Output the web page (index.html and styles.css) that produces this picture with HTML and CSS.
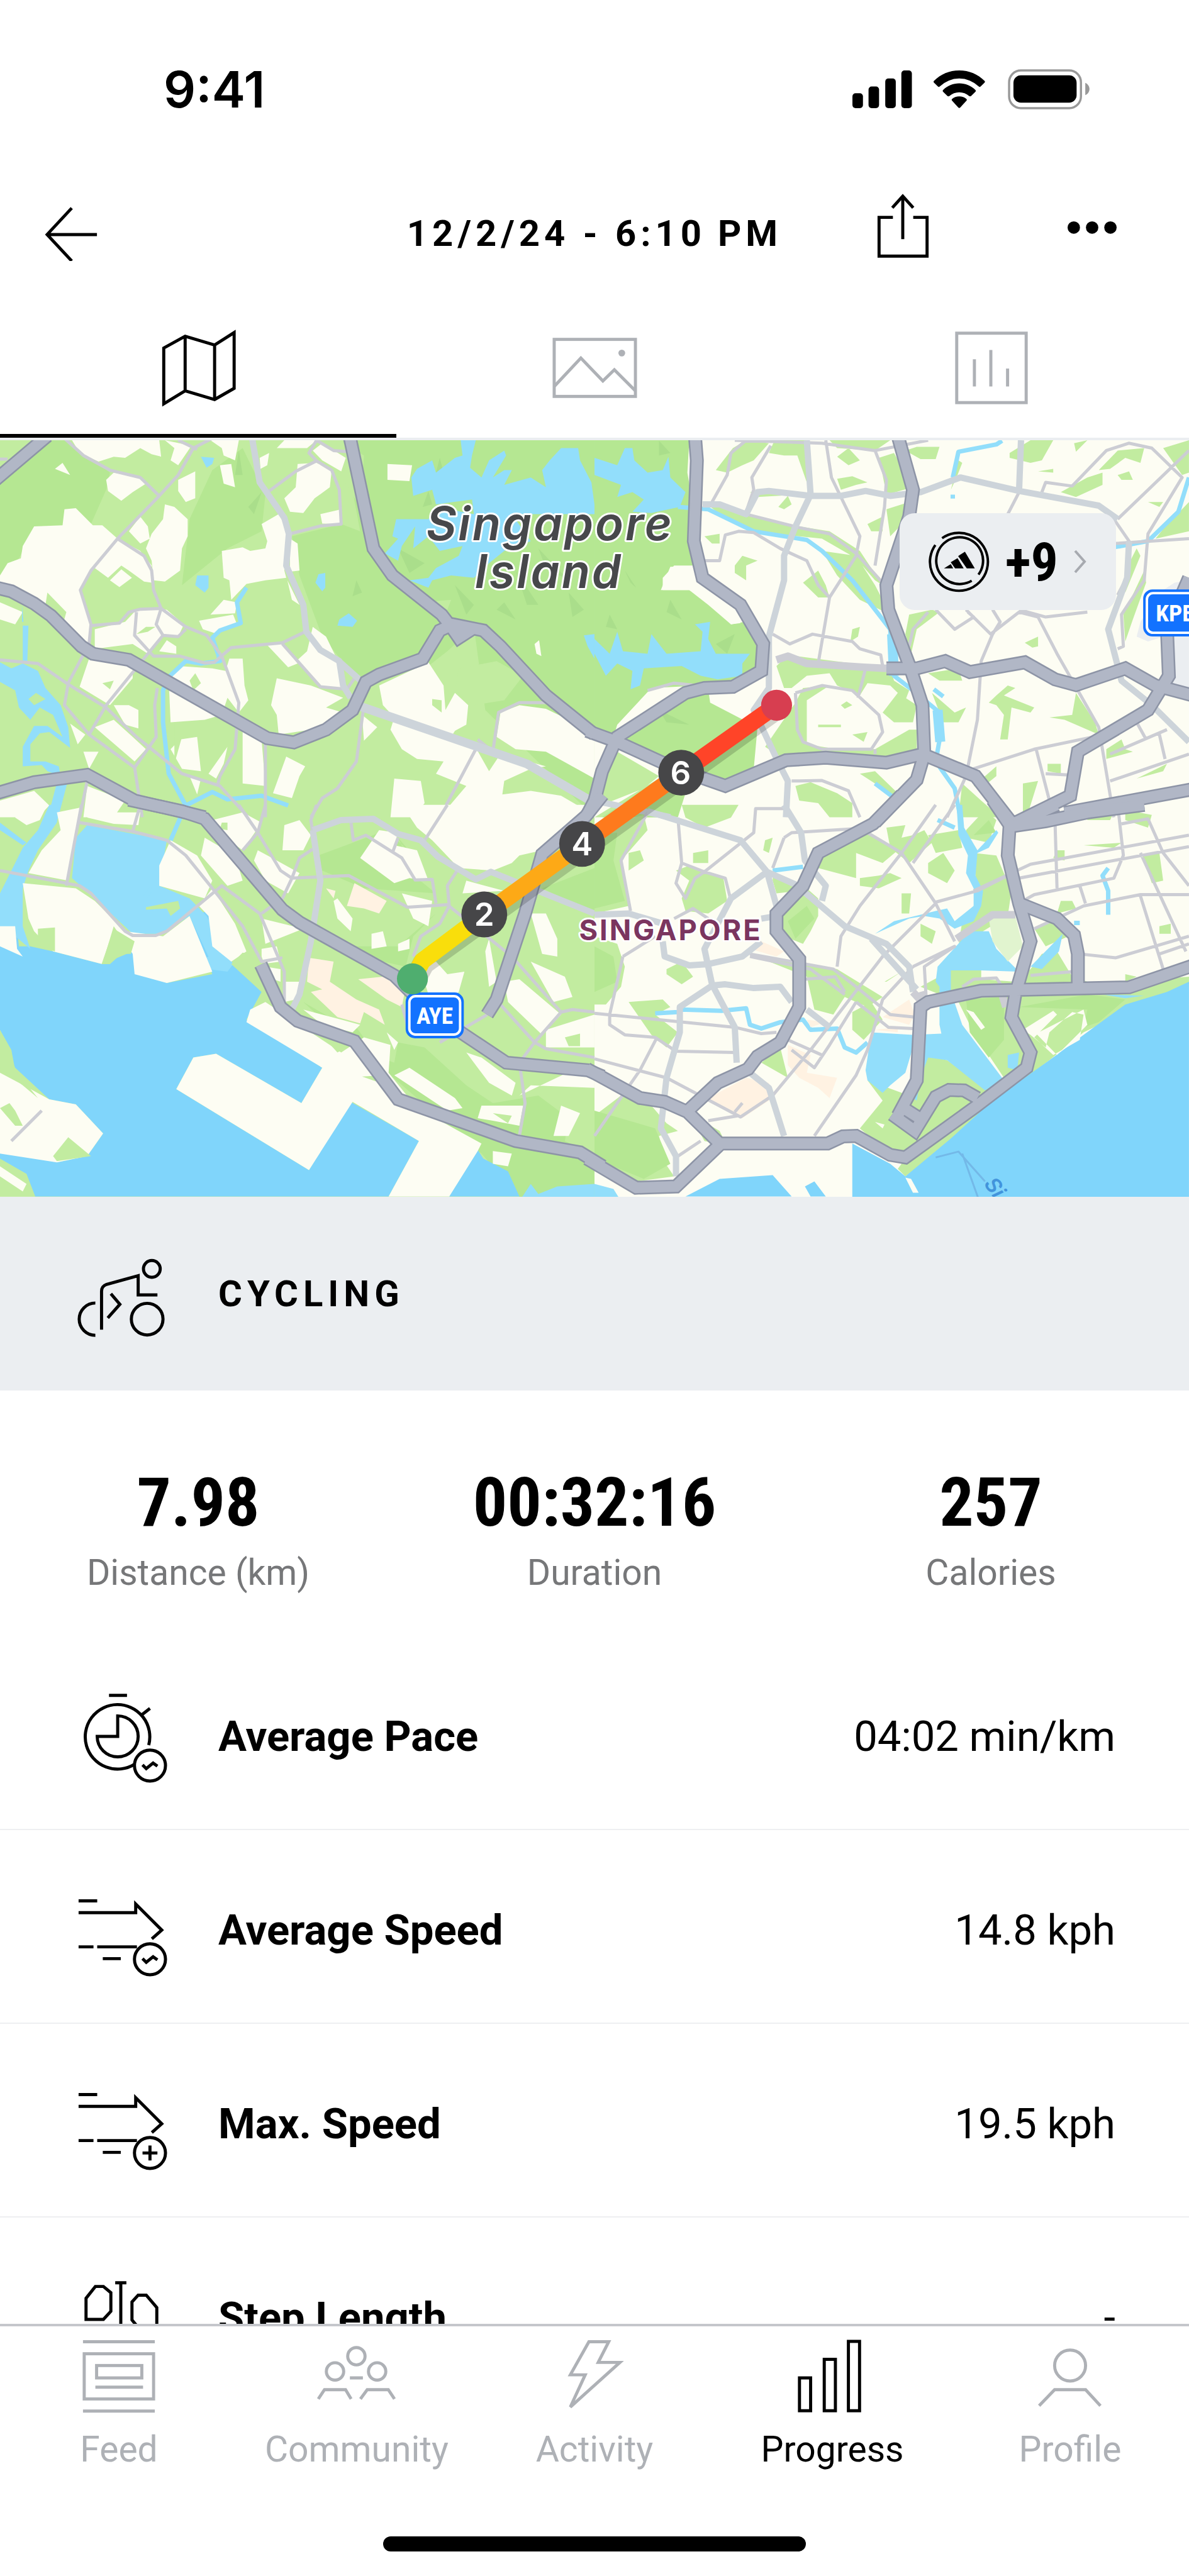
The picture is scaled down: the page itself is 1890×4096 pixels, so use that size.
FILE: index.html
```html
<!DOCTYPE html>
<html lang="en">
<head>
    <meta charset="UTF-8">
    <meta name="viewport" content="width=device-width, initial-scale=1">
    <title>Cycling - 12/2/24</title>
    <link rel="stylesheet" href="styles.css">
</head>
<body>
    <div class="statusBar">
        <span class="time">9:41</span>
        <svg class="statusIcons" viewBox="1377 108 384 68">
            <rect x="1377" y="149" width="17" height="24" rx="5"/>
            <rect x="1403" y="138" width="17" height="35" rx="5"/>
            <rect x="1430" y="125" width="17" height="48" rx="5"/>
            <rect x="1456" y="112" width="17" height="61" rx="5"/>
            <path d="M1549.500 112c16 0 30 6 41 17q1 1 0 2.500l-6.500 6.500q-1.500 1.500-3 0a45 45 0 0 0-63 0q-1.500 1.500-3 0l-6.500-6.500q-1-1.500 0-2.500c11-11 25-17 41-17z"/>
            <path d="M1549.500 133c10 0 19 4 26 10.500q1.500 1.500 0 3l-7 7q-1.500 1-3 0a24 24 0 0 0-32 0q-1.500 1-3 0l-7-7q-1.500-1.500 0-3c7-6.500 16-10.500 26-10.500z"/>
            <path d="M1549.500 154c4.500 0 8.500 1.500 11.500 4q1.500 1.500 0 3l-10 11q-1.500 1.500-3 0l-10-11q-1.500-1.500 0-3c3-2.500 7-4 11.500-4z"/>
            <rect x="1630" y="112" width="116" height="61" rx="19" fill="none" stroke="#999" stroke-width="3.500"/>
            <rect x="1637" y="120" width="102" height="44" rx="12"/>
            <path d="M1753 132c9 4 9 16 0 20z" fill="#999"/>
        </svg>
    </div>

    <header class="header">
        <a class="back" href="#" aria-label="Back">
            <svg viewBox="72 332 90 90"><path d="M116 336L76 379l40 43M76 379h81"/></svg>
        </a>
        <h1 class="title">12/2/24 - 6:10&#8201;PM</h1>
        <div class="actions">
            <button class="iconBtn" aria-label="Share">
                <svg class="share" viewBox="1412 312 92 130"><path d="M1442 351.500h-22.500v63h78v-63H1475M1458 317v70M1441 336l17-19 17 19"/></svg>
            </button>
            <button class="iconBtn" aria-label="More">
                <svg class="more" viewBox="1722 354 82 46"><circle cx="1734" cy="368" r="10"/><circle cx="1763.500" cy="368" r="10"/><circle cx="1793" cy="368" r="10"/></svg>
            </button>
        </div>
    </header>

    <div class="tabs">
        <button class="tab active" aria-label="Map">
            <svg viewBox="250 523 140 140"><path d="M264.500 652v-90L299 543l47.500 14L378 537v90l-31.500 18L299 631zM299 543v88M346.500 557v88"/></svg>
        </button>
        <button class="tab" aria-label="Photos">
            <svg viewBox="890 523 140 140"><rect x="895" y="548" width="131" height="92"/><path d="M895 624l43-46 35.500 37 18.500-18 34 34"/><circle cx="1004" cy="570" r="3" class="solid"/></svg>
        </button>
        <button class="tab" aria-label="Charts">
            <svg viewBox="1530 523 140 140"><rect x="1545" y="538" width="112" height="112"/><path d="M1573.500 580v44M1600 565v59M1627 595v29"/></svg>
        </button>
    </div>

    <main class="content">
        <section class="mapBox">
            <svg class="map" viewBox="0 711 1920 1222">
                <defs>
                    <!-- expressways, drawn twice: wide casing, then fill -->
                    <g id="motorways">
                        <path transform="translate(0 700) scale(.6122 .3954)" d="M-20 200L125 10M-10 630L30 645 90 695 135 745 215 870 245 900 340 925 705 1245 775 1262 860 1210 930 1130 965 1015 1000 985 1115 920 1160 805 1195 780 1275 805 1320 870 1440 1070 1568 1230M922 10L985 470 1035 580 1165 740 1190 790 1210 835 1245 800M-20 1475L90 1425 230 1395 355 1500 480 1545 540 1568"/>
                        <path transform="translate(960 700) scale(.6122 .3954)" d="M265 10L270 110 262 440 285 590 385 700 445 860 440 970 365 1035 290 1040 240 1060 60 1240 20 1380 0 1500-20 1560M-20 1215L60 1260 215 1370 345 1440 505 1335 610 1325 770 1345 865 1310 1005 1400 1100 1590M800 10L840 230 830 340 770 620 775 720 830 945 865 1110 870 1310 850 1415 740 1590M770 960L850 960 925 930 990 975 1135 935 1215 1005 1270 1028 1400 960 1480 1030 1590 1075M1568 590L1510 800 1515 990 1460 1130 1275 1300 1255 1480 1110 1590M1240 1550L1590 1450"/>
                        <path transform="translate(0 1300) scale(.6122 .4082)" d="M340-20L480 25 540 55 745 415 790 465 1040 675 1090 750M1190 875L1335 1020 1550 1050 1590 1075M688 632L740 800 785 855 935 935 1050 1165 1360 1330 1530 1375 1590 1430M1590-40L1545 45 1430 195 1385 430 1310 770 1285 830"/>
                        <path transform="translate(960 1300) scale(.6122 .4082)" d="M-20 1045L120 1160 185 1175 245 1215 330 1340 615 1340 655 1312 690 1310 780 1385 820 1395 1005 1195 1140 1040 1150 980 1100 840 1110 750 1150 540 1120 390 1090 200 1095 80 1050-20M250 1205L325 1100 405 1045 430 995 490 940 540 800 540 610 480 500 480 430 550 320 590 190 735 75 810-40M330 1345L215 1510 110 1515-20 1400M1100 85L1190 65 1300 30 1450 0M1115 70L1220 0M1120 390L1220 450 1265 515 1275 590 1275 725M800 1230L850 1090 860 800 880 780 1020 735 1410 722 1590 630M785 1225L845 1290 900 1155 935 1128 975 1130 1010 1160M805 1190L868 1250"/>
                    </g>
                </defs>

                <rect class="grass" x="0" y="711" width="980" height="1222"/>
                <rect class="land" x="960" y="711" width="960" height="1222"/>

                <!-- north west -->
                <g transform="translate(0 700) scale(.6122 .3954)">
                    <path class="wood" d="M0 200L130 28 180 28 290 160 280 230 240 370 160 380 90 380 50 510 0 580zM560 150L640 60 700 250 690 400 600 470 480 620 500 350zM905 28H1568V1568L1280 1130 1250 790 1180 890 1130 950 1000 1000 940 1000 850 830 790 580 770 420 900 370 950 400z"/>
                    <path class="grass" d="M1210 960L1310 930 1380 990 1330 1090 1250 1110 1200 1050zM1110 690L1190 680 1170 760zM905 40L960 90 950 300 910 200z"/>
                    <path class="shade" d="M1050 470L1120 530 1080 570zM940 600L955 650 930 665zM1060 600L1140 720 1080 660zM630 70L640 170 620 170zM690 240L670 330 655 300zM1130 235L1140 290 1115 300zM1200 620L1250 700 1230 740zM1330 690L1360 760 1310 720zM1360 560L1420 700 1390 700zM1420 470L1500 600 1440 550zM1500 650L1540 720 1510 750zM1160 100L1170 160 1150 160z"/>
                    <path class="land" d="M190 28H420L425 95 400 85 370 60 330 100 300 95 260 115 210 80zM435 28L505 50 470 130 450 110 460 60zM555 28H630L620 110 590 90 585 60zM145 145L165 120 185 170zM280 190L300 160 370 180 385 205 350 240 320 275 285 235zM470 190L515 155V265L490 280 470 235zM580 130L610 125 620 220 590 205zM685 100L710 80 705 130 687 145zM730 60L750 28H835L810 60zM825 70L850 40 912 100 900 155 850 110zM785 125L835 120 875 150 870 220 830 265 800 325 765 320 750 265 780 220zM845 330L895 312 900 370 850 368zM1022 125L1087 130 1080 195 1022 190zM170 310L200 305 245 375 270 375 310 430 240 555 215 640 240 780 235 870 215 870 165 785 175 730 125 650 120 700 50 650 0 620V580L20 530 55 510 60 460 90 380 165 375zM340 400L370 340 390 380 395 430 370 450zM435 290L460 300 495 350V420L480 470 475 560 435 605 405 600 400 520 385 470 400 410 430 350zM250 550L310 430 370 480 400 540V610L380 605 340 560 320 540 285 590zM290 600L320 555 348 590 315 628zM585 480L640 465 660 480 700 470 705 440 690 370 735 330 760 400 750 560 755 590 700 600 650 615 610 680 605 600 590 590zM765 430L785 450 790 560 765 565zM758 600L790 700 770 680zM250 800L330 770 360 720 440 720 485 780 470 830 430 825 390 900 350 860 250 880zM525 765L615 740 625 780 565 815 535 800zM555 740L590 680 625 690 620 735zM420 890L440 845 465 870V900zM705 865L745 860 785 940 760 955zM785 925L810 890 825 790 860 830 885 910 905 1000 900 1040 850 1035zM235 920L330 930 350 960V1000L290 1110 210 1035zM300 1110L340 1110 365 1130V1205L330 1190zM470 950L560 960 595 970 605 920 640 920 645 1030 655 1090 630 1140 600 1080 585 1150 540 1170 450 1180 445 1010zM730 1000L820 1030 905 1080 860 1120 905 1140 860 1190 820 1210 735 1230 730 1150 715 1110zM1000 1030L1130 935 1170 1030 1175 1130 1200 1060 1235 1110 1230 1190 1200 1215 1190 1240 1250 1270 1290 1380 1320 1310 1440 1360 1400 1370 1330 1420 1325 1475 1400 1460 1480 1480 1568 1560V1568H1160L1230 1440 1150 1390 1170 1340 1100 1330 1060 1290 1030 1210 1040 1160 1010 1110zM1310 1240L1320 1140 1370 1110 1440 1125 1500 1170 1568 1240V1410L1440 1300 1360 1290zM1410 860L1422 845 1428 910 1415 900zM250 1200L300 1170 350 1240 385 1290 355 1340zM475 1250L520 1240 530 1380 480 1370 450 1290zM640 1200L690 1250 700 1440 640 1430zM755 1320L805 1360 790 1400 770 1490 720 1470zM955 1150L995 1200 960 1255zM1040 1410L1110 1420 1120 1510 1090 1568H1030zM220 1300L260 1300 235 1370zM500 1400L530 1410 520 1475zM0 1500L90 1460 130 1520 100 1568H0zM0 690L60 730 40 780 0 760zM185 1185L225 1230 205 1270zM550 1390L600 1280 590 1350 570 1410zM230 1440L330 1500 300 1568H220z"/>
                    <path class="grass" d="M360 820L385 790 410 790 390 810zM500 1010L515 980 530 1020 510 1050zM270 1020L300 1010 290 1045zM1140 1085L1165 1090V1140L1140 1110zM460 1180L540 1175 540 1230 480 1240 460 1350z"/>
                    <path class="lake" d="M1215 28H1255L1245 90 1240 140 1270 180 1290 110 1330 70 1335 90 1300 180 1330 150 1350 150 1330 210 1400 180 1440 220 1430 150 1450 110 1480 60H1525L1530 110 1560 200 1568 290V330H1350L1400 440 1330 480 1290 530 1250 590 1190 580 1140 600 1130 630 1080 600 1130 590 1150 550 1210 500 1220 460 1160 480 1130 420 1090 470 1095 380 1060 460 1050 520 1015 490 1050 430 1035 420 1045 350 1130 350 1150 300 1250 330 1245 270 1150 290 1140 230 1090 255 1085 180 1100 145 1140 110 1150 160 1200 100 1220 90zM530 95L565 100 560 125 545 140zM520 580L550 580 550 630 540 650 515 620zM840 575L858 570V630L850 645 832 610zM895 760L920 735 942 765 930 790 890 785zM0 935L30 960 60 940 100 970 120 1040 160 1110 180 1200 185 1285 130 1220 105 1225 80 1270 80 1340 120 1340 155 1360 160 1400 125 1380 110 1355 60 1360 60 1280 90 1195 125 1195 165 1240 140 1150 105 1120 80 1170 50 1120 40 1050 0 1015zM75 1085L90 1110 120 1085 95 1060zM58 700L62 770 58 770zM60 785L75 785 72 940 60 940zM1540 825L1568 820V920L1550 870z"/>
                    <path class="river" d="M650 630L625 690 635 775 580 805 560 835 575 900 580 930 530 940 490 930 445 995 430 1050 430 1180 445 1390 490 1520 560 1465 600 1495 690 1480 760 1520"/>
                    <path class="river wide" d="M165 1420L140 1568"/>
                    <path class="minor" d="M170 20L220 90 290 150 370 180 420 255M560 20L510 60 470 170 420 255 310 430 240 560 212 640 240 780 235 860 180 1020 170 1110 235 1230 355 1365 375 1568M470 28L520 65M310 430L380 500 400 560 405 640 425 715 412 780 430 825 390 900 280 1110 235 1230M240 785L315 775 340 730 370 718 425 715 490 790 545 825 585 910 630 1100 620 1290 580 1400 575 1430M360 730L355 825 405 910 475 910 540 938 565 935 610 875 745 855 805 810M430 825L470 830 490 800M0 925L100 940 180 1025 280 1120 360 1240 480 1390 580 1440 655 1568M745 860L845 1035 915 1045 935 1000M415 1040L408 1110 412 1240 355 1365M700 1260V1568M960 1110L940 1340 890 1450 850 1490 820 1568M835 28L815 80 835 112 875 150 895 230 900 370 845 378 765 410M835 112L780 155 710 235M835 28L880 70 920 75M1440 1100H1370L1315 1140 1300 1300 1260 1250M1255 1290L1160 1568M230 1420L210 1568M0 105H20"/>
                    <path class="medium" d="M665 20L685 200 750 345 762 410 755 540 800 700 808 810 845 885 895 930 905 1030 925 1080M890 925L955 1015"/>
                    <path class="medium big" d="M950 1115L1390 1350 1568 1510"/>
                </g>

                <!-- north east -->
                <g transform="translate(960 700) scale(.6122 .3954)">
                    <path class="wood" d="M0 28H250L245 160 260 300 250 450 280 540 200 545 175 640 250 640 300 700 360 780 395 770 430 870 430 970 350 1030 280 1030 150 1040 60 1190 50 1240 0 1200z"/>
                    <path class="land" d="M290 1040L370 1060 420 1060 425 1110 380 1160 330 1150 305 1090zM270 540H210L180 590V640L250 640 320 690 360 780 385 775 370 700z"/>
                    <path class="wood" d="M60 1260L230 1060 300 1045 305 1100 380 1160 430 1200 420 1370 340 1440 200 1360z"/>
                    <path class="shade" d="M170 30L200 80 170 90zM80 560L110 630 95 610zM40 740L60 800 30 790zM200 680L230 760 190 730zM320 860L370 820 350 900zM170 1130L250 1190 190 1180z"/>
                    <path class="lake" d="M80 60L100 60 105 110 140 160 180 150 195 95 200 180 240 240 225 300 150 325 100 320 130 270 100 240 60 260 70 210 0 170V100L60 130zM0 840L40 900 60 810 75 890 140 900 150 820 190 900 280 890 285 810 265 780 305 770 300 840 320 900 410 900 390 940 390 990 325 1005 280 990 230 950 130 960 120 1030 95 1045 100 970 60 940 30 990 0 900z"/>
                    <path class="grass" d="M365 60L400 28 460 40 420 110 390 130 350 160 320 150zM475 28H560L560 200 535 90 500 90 460 80zM620 28H780L740 70 640 60zM640 95L670 60 700 110 670 130zM640 185L680 175 720 200 690 210 650 230zM750 100L790 80 840 220 770 250 760 170zM820 70L850 55H910L900 105H860zM290 420L330 410V450L310 450zM370 540L390 500 430 520 400 540 400 600 370 570zM290 280L400 330 540 380 620 400 700 480 760 620 740 600 690 510 600 430 540 420 420 400 330 330zM410 240L550 240 540 250 430 260zM485 300L510 255 520 290 500 310zM720 370L760 340 760 400 730 400zM770 310L830 280V340L780 420zM550 610L590 560 610 620 620 670 590 670zM600 480L690 500 740 620 780 740 700 680 640 580zM680 800L700 790 695 830 675 850zM830 740L890 720 910 730 850 800 835 900 820 820zM940 230L960 110 970 120 955 180zM1095 80L1150 28H1210L1180 110 1150 120 1095 100zM1265 40L1300 28 1270 75zM1330 150L1380 70 1450 60 1440 120 1400 100 1360 145zM1380 170L1410 155 1420 190 1390 190zM1230 240L1300 180 1340 160 1340 210 1270 260zM1170 155L1210 145 1210 160zM1500 60L1568 28V160L1550 170zM1500 390L1568 280V400L1480 430zM1460 280L1500 280 1490 300zM1400 850L1395 740 1450 560 1455 610 1420 760zM1400 560L1430 470 1440 500 1400 650zM1135 855L1170 830 1170 870 1155 875zM480 950L510 905 780 960 790 1010 830 1050 820 1090 780 1030 720 1020 700 1070 640 1030 620 980 560 990 520 1040 500 1040zM450 1280L530 1100 550 1040 620 1030 560 1090 560 1270 640 1290 740 1290 830 1210 850 1210 850 1330 780 1340 500 1330zM650 1110L665 1095 680 1110 660 1125zM590 1190H650V1200H590zM800 1060L850 1110 840 1180 790 1180 760 1140zM880 980L960 960 970 1010 910 1010zM1090 1030L1110 1040 1080 1070 1160 1120 1150 1140 1100 1120 1090 1250 1070 1250 1080 1150 1060 1110 1040 1100 1060 1070zM1270 1060L1320 1180 1330 1230 1240 1170 1200 1160 1260 1150zM890 1060L950 1140 980 1120 960 1180 920 1180zM680 1230L720 1220 710 1260zM530 1440L570 1425 640 1470 680 1510 680 1568 620 1568 590 1510 540 1500zM700 1390L740 1380 800 1470 780 1480 750 1440zM1000 1440L1060 1360 1060 1400 1020 1450zM970 1430L1020 1500 1070 1568H960zM1130 1430L1170 1420 1140 1568H1130zM1195 1350L1230 1350 1230 1390 1195 1380zM1350 1330L1420 1300 1400 1290 1390 1250 1350 1290zM1430 1410L1510 1350 1500 1380zM0 1568L180 1400 230 1470 200 1568zM0 1400L60 1300 170 1400 130 1450 0 1530z"/>
                    <path class="plain" d="M1440 770L1500 640 1530 610 1568 600V1070L1500 1000 1500 830 1460 850 1430 830z"/>
                    <path class="wood" d="M20 1568L180 1400 240 1470 220 1568z"/>
                    <path class="river" d="M1075 30L1060 45 960 75 945 180M220 300L300 310 420 400 560 435 600 480 680 600 760 760 780 800 790 990 840 1050 910 1140 915 1210 900 1340 950 1450 965 1568M1568 180L1540 320 1460 440 1370 465M945 250V266M895 1045L920 1075M740 1430L800 1500"/>
                    <path class="river wide" d="M785 820L790 990M905 1130L912 1260"/>
                    <path class="minor" d="M310 280L350 170 360 80 400 28M400 320L420 230 415 180 465 50M610 28L625 180 700 420 690 500 620 670 590 940M400 330L540 385 620 410 690 490 760 610M740 70L770 190 765 300 740 540M370 28L600 40 740 70 880 28M290 520H330L345 415 380 400 420 405 490 470 560 520 590 620 620 670M470 820L515 860 575 820 680 850 700 880 755 905 760 950M530 1060L600 1030 680 1050 750 1150 760 1220 730 1290 600 1290 550 1260 535 1210 530 1060M715 960L695 1080M520 1420L600 1418 670 1460 700 1568M880 730L840 800 830 870M900 720L950 800 1000 750 985 730M1050 720L1070 770 1050 820 1020 930 1010 1170 980 1400 930 1568M980 720L1045 820 1120 730 1170 750 1220 900 1330 1200 1370 1568M1120 720L1190 750 1300 730M1000 1370L1160 1290 1330 1235M1165 1290L1200 1500M1190 1390L1250 1395M1090 330L1120 240M1180 240L1190 200 1260 215 1350 70 1410 40 1470 60 1550 180 1460 410 1450 600 1390 740 1395 870 1380 880M1568 70L1380 350M1360 1310L1510 1210M1430 1180L1455 1250M1490 1230L1505 1330M1360 1420L1568 1310M1370 350L1410 440 1410 570 1380 660M140 1050L210 1020 270 1030M740 1290L740 1310M1370 450L1568 430"/>
                    <path class="minor wide" d="M480 925L510 910 560 940 710 955 770 960"/>
                    <path class="medium" d="M560 28L570 250 530 380 500 500 500 600 460 830 460 900 460 1040 420 1130 490 1360 510 1420 505 1568M285 290L330 290 400 330 430 240 460 235 570 255 650 255 715 235 780 255 860 240 965 180 1120 235 1330 295 1380 350M1125 28L1120 230M1410 440L1405 590 1355 800 1390 1010 1470 1110 1568 1260M0 1500L60 1520 200 1568"/>
                </g>

                <!-- south west -->
                <g transform="translate(0 1300) scale(.6122 .4082)">
                    <path class="wood" d="M840 200L1020 100 1090 200 1050 130 1100 290 1150 350 960 330 850 260zM800 780L930 960 1040 1020 1050 940 1120 960 1230 1110 1300 1180 1420 1150 1500 1240 1490 1330 1568 1390V1568H1380L1270 1380 1030 1070 940 880 880 850zM1150 430L1050 560 900 560 950 600 1070 640 1090 520zM1430 330L1568 250V430z"/>
                    <path class="sea" d="M0 360L40 430 50 560 80 560 140 580 270 630 350 580 360 660 440 705 560 670 500 440 550 420 560 500 610 620 690 740 650 850 850 1040 795 1180 570 985 510 1000 465 1125 815 1445 925 1175 1105 1330 1025 1550H93L70 1460 0 1400V1380L30 1362 150 1415 230 1390 272 1300 200 1185 130 1165 40 1040 0 890z"/>
                    <path class="lake" d="M230 80L440 140 430 230 420 320 500 370 545 440 615 630 600 660 500 640 550 600 500 440 430 510 350 510 250 370 190 290 200 130zM130 0H160L150 70 100 180 75 260 60 330 60 480 80 570 40 520 0 480V350L40 230 60 170 100 100zM0 70L70 150 60 160 0 100z"/>
                    <path class="sea" d="M1260 1365L1275 1400 1340 1450 1370 1550H1185L1230 1420z"/>
                    <path class="lake" d="M1370 1568L1400 1500 1420 1540 1470 1510 1568 1500V1568z"/>
                    <path class="land" d="M0 480L40 480 45 570 60 600 0 560zM60 310L200 330 250 380 330 500 430 520 500 440 560 660 440 705 355 670 350 590 300 480 270 630 140 580 90 500 75 450zM850 1040L650 860 660 810 700 780 900 980 960 920 1030 950 1025 1060 1100 1200 1270 1340 1260 1370 1185 1550H1025L1105 1330 930 1175 815 1445 465 1125 510 1000 570 985 795 1180zM0 1060L50 1100 130 1165 200 1185 272 1300 230 1390 150 1415 0 1380zM50 0H125L105 60 70 80 40 50zM150 30L215 10 200 130 180 300 75 270 110 180 160 100zM240 30L370 30 365 80 300 75 230 50zM450 140L520 200 560 300 540 370 420 320 420 240zM525 400L560 330 620 470 650 580 610 620 560 560 550 440zM560 60L640 30 690 70 640 180 550 80zM540 130L620 200 640 300 600 320 530 200zM680 180L730 220 790 270 760 350 700 300 670 220zM750 80L790 60 820 120 800 180 745 180zM1000 100L1050 110 1040 160 1100 180 1130 300 1080 290 1040 310 950 210zM1060 0H1560V30L1430 180 1370 200 1350 230 1300 260 1210 250 1140 140 1100 90zM890 370L930 450 925 500 890 450 880 380zM690 450L800 490 700 550zM690 570L730 560 740 620 690 630zM980 510L1010 500 1020 560 980 570zM1050 550L1080 530 1080 570 1050 580zM1060 350L1140 380 1130 480 1090 450zM700 640L740 650 740 700 720 690zM750 700L790 700 780 770 750 780zM800 810L900 850 950 870 930 900 850 870zM1110 650L1150 620 1180 670 1225 660 1210 740 1180 780 1130 750zM1230 300L1330 340 1220 350zM1290 530L1310 700 1290 720 1280 580zM1400 430L1440 430 1470 530 1470 600 1430 590zM1400 620L1490 680 1510 760 1460 780zM1330 700L1370 690 1480 830 1430 910 1340 780zM1440 890L1568 830V960L1440 960zM1080 1040L1200 1160 1220 1200 1180 1210 1040 1070zM1230 980L1270 1000 1360 1100 1350 1150 1290 1100zM1270 1190L1380 1190 1370 1270 1300 1250 1260 1240zM1480 1190L1530 1220 1500 1310 1460 1310zM1300 1370L1350 1380 1340 1430 1300 1420zM1370 1150L1510 1050 1568 1060V1120L1400 1110zM0 1430L70 1500 60 1530 0 1470zM1020 900L1050 940 1040 970z"/>
                    <path class="grass" d="M100 490L145 485V580L100 560zM300 490L355 540 345 590 320 590 290 630 268 630zM385 405L470 380 475 410 450 440 430 380 440 410 385 415zM585 70L600 70 600 100 580 95zM140 1390L180 1315 240 1390 150 1410zM0 890L30 970 40 1050 100 1160 60 1110 0 1040zM0 1200L25 1180 40 1210 60 1270 40 1270zM610 630L640 585 690 600 740 800 720 800 690 740zM1490 920L1530 905 1530 955 1500 955zM1300 1220L1350 1230 1340 1260zM955 1075L1010 1070 1040 1120zM860 930L940 940 890 980z"/>
                    <path class="plain2" d="M935 310L1020 380 1000 430 960 410 915 400zM860 330L885 340 880 370zM815 605L880 620 870 700 940 770 1000 810 1015 870 960 820 950 865 890 840 820 740 850 730 810 700zM945 690L1010 680 1070 720 1060 800 1020 770z"/>
                    <path class="river" d="M490 0L450 140M380 370L400 330"/>
                    <path class="minor" d="M215 0L175 320M0 260L210 320 240 350 330 500 350 517 410 517 440 500 585 320 685 430 750 660 750 790M210 70L350 105 440 140 490 200 560 330 640 480 690 620 745 605M370 0L350 105M630 0L680 110 740 260 770 290 920 280 1075 405 1180 395 1350 600 1480 820 1410 940 1370 1020 1385 1180 1370 1310M700 0L680 110 640 180M825 175L790 210 770 290 745 370 690 430M925 60L932 140 965 120 1060 210 1095 297 1140 295 1150 390M1050 130L1035 190M1180 0L1120 140M1210 250L1180 320 1185 400 1160 470 1110 520 1090 600M835 0L820 60 825 110M1320 790L1410 940 1440 965 1568 1000M1480 820L1510 810 1568 820M1285 830L1160 940M1060 790L1080 900M30 1330L110 1210"/>
                    <path class="medium" d="M825 100L900 60 985 55 1050 115 1110 140 1155 205 1255 295 1295 265 1568 430M825 100L845 300 820 540 790 750 770 810"/>
                </g>

                <!-- south east -->
                <g transform="translate(960 1300) scale(.6122 .4082)">
                    <path class="grass" d="M0 90L130 40 140 100 70 220 90 400 0 430zM230 0H380L360 50 290 90 240 50zM770 90L820 80 810 130 840 120 870 100 890 150 830 230 780 170zM880 230L920 190 950 260 930 310 880 270zM590 190L680 100 730 120 800 180 760 230 690 190 690 290 640 270 590 250zM90 190L120 180 130 220 90 260zM260 190L300 180 300 230 260 230zM450 140L470 130 460 190 445 180zM215 260L250 240 340 290 350 380 300 430 240 420 230 370 250 300zM700 290L750 280 780 270 810 290 750 330 700 320zM470 270L530 310 540 340 480 350 470 300zM560 330L590 370 590 440 570 500 550 550 500 520 490 450 530 380zM810 350L835 350 830 430 810 430zM860 470L900 500 890 550 860 520zM980 100L1030 20 1060 60 1040 150 980 130zM880 120L960 100 970 170 900 190zM1000 190L1060 200 1100 340 1090 440 960 560 970 460 1010 380zM0 520L60 550 80 640 70 720 30 790 0 790zM190 650L230 620 260 680 230 710 190 670zM410 590L640 650 760 760 720 800 660 760 630 830 580 810 560 680zM680 820L730 780 760 850 710 930 680 890zM90 780L180 770 200 800 160 830 220 900 190 960 150 910zM0 640L40 620zM490 960L510 1080 440 1020zM0 1230L70 1150 150 1190 190 1260 220 1290 170 1310 180 1370 160 1360 210 1470 110 1490 0 1410zM250 1220L330 1290 350 1350 290 1330zM1300 0H1380L1360 60 1300 60zM1400 20L1470 40 1460 90 1400 60zM1290 160L1390 150 1370 170zM1445 200L1490 190 1500 300 1470 310zM1220 180L1240 180 1240 220 1210 210zM1230 380L1260 380 1270 410 1220 430zM1490 480L1520 470 1520 510 1490 510zM1160 490L1230 430 1250 520 1190 560zM1150 650L1180 590 1220 580 1260 680 1300 700 1410 700 1480 690 1568 680V710L1400 820 1290 900 1200 1010 1060 1170 1030 1210 960 1310 820 1470 800 1440 810 1420 700 1280 760 1170 720 1090 830 1150 870 990 930 1010 1030 1120 1080 1080 1000 900 960 780 860 720 940 655 1020 655 1020 690 1110 700zM1400 670L1430 680 1400 700zM765 700L810 660 770 700z"/>
                    <path class="wood" d="M0 560L50 600 60 700 0 740zM0 120L60 110 50 220 80 380 0 410zM0 1210L160 1280 200 1420 130 1480 0 1400zM1120 800L1300 750 1400 770 1330 860 1290 880 1300 810zM980 770L1080 760 1080 930 1040 1000 990 900zM1000 120L1040 60 1060 110zM560 400L580 450 530 530 510 460z"/>
                    <path class="sea" d="M1568 700V1568H680V1340L780 1420 820 1470 940 1320 1050 1170 1200 1010 1290 910 1400 790 1510 740zM240 1550L330 1480 470 1465 520 1550zM555 1510L580 1490 610 1550H570z"/>
                    <path class="lake" d="M990 500L1040 500 1060 570 1100 630 1120 660 1020 655 940 655V740L970 870 1080 1090 1030 1130 930 1010 880 1000 860 1080 850 1170 840 1160 870 1000 840 960 820 1060 780 1110 760 1140 720 1090 715 1050 730 900 840 910 915 905 910 870 910 720 900 700 905 640zM955 0H970L975 90 1010 180 1060 100 1065 110 1040 170 1010 190 1005 280 1025 340 1020 400 1000 460 950 490 910 450 870 440 830 450 740 510 790 460 900 420 930 410 950 460 1000 400 1000 330 980 270 985 200 960 120zM1150 640L1235 510 1225 580 1180 650zM1090 990L1120 980 1115 1050 1090 1040zM1340 750L1450 755 1400 765zM0 1500L50 1520 70 1568H0z"/>
                    <path class="river" d="M160 825L220 820 230 810 335 815 400 805 410 870 440 885 490 860 550 850 570 890 640 885 660 960 690 980 720 940M470 260L550 245M1355 250L1340 280 1355 340 1355 435M905 60L950 90M1265 467H1280"/>
                    <path class="land" d="M1130 890L1210 815 1220 830 1160 920 1210 990 1280 930 1290 830 1260 820 1200 900 1190 960 1150 910zM1165 905L1290 810 1300 870 1220 990zM980 810L1000 820 1030 880 1020 890zM820 1475L835 1480 855 1535 840 1535zM740 1255L765 1265 760 1280z"/>
                    <path class="plain2" d="M300 1160L400 1080 460 1100 460 1170 390 1240 340 1200zM510 950L570 990 560 1060 640 1080 620 1160 590 1120 540 1080 510 1030zM760 840L830 770 845 830 830 870zM740 890L800 880 800 900zM410 570L440 540 500 580 480 600zM560 850L610 860 570 880z"/>
                    <path class="grass light" d="M1040 450L1110 440 1130 560 1090 620 1050 540z"/>
                    <path class="minor" d="M0 825L370 880 440 905 480 900M40 830L40 870 80 910 160 920 215 975 370 980M165 920L120 1050 0 1310M0 1005L190 1080 385 1235 470 1150 575 960 760 600 900 390 950 540M720 110L810 190 900 390M950 0L840 230M900 0L810 190 700 400 650 520 640 640M410 590L630 650 690 720 780 830 845 840M410 600L570 650 660 750M555 690L635 680 660 740M690 780L750 850 775 880 840 885M690 780L620 950 580 1040 520 970M840 640L760 770 720 970 690 1070 580 1310M840 640L950 560 870 640 875 770M510 930L600 990M140 30L70 220 95 420M220 50L230 230 290 265 420 110 425 15H500M230 230L215 310 240 370 265 290 290 265 345 290 360 380M210 450L260 410 300 450M75 600L160 520M75 600L40 830M500 130L520 110 680 95M500 130L470 250M900 385L1010 340 1090 280M1000 340L1150 235 1568 120M1120 290L1568 165M1130 380L1160 355 1370 290 1395 200 1380 0M1160 490L1290 400 1440 355H1568M1215 80L1220 330M1280 320L1295 390M1390 75L1460 55 1500 190 1568 320M1440 360L1500 650M1440 190L1560 580M1280 590L1375 605 1568 520M1490 590L1568 550M970 720L1000 690 1060 685 1080 730M1150 675L1260 660M390 1180L370 1215M300 1250L380 1230M220 1390L280 1330"/>
                    <path class="medium" d="M140 25L385 140 455 265 530 315 660 480 770 550 830 640 840 740M500 0L545 110 555 220 610 320 600 380M455 265L360 370 290 570 310 710 370 880 375 1020M455 265L480 400M180 540L185 600 250 635 300 630 390 600 440 540M310 715L225 800 225 900 190 1080 175 1280 215 1390 215 1470M310 715L345 710 420 725 490 720 520 780M560 810L620 880M410 1060L460 1120 500 1310M0 435L90 430 180 470M730 530L850 730M440 450L480 440"/>
                    <path class="minor wide" d="M840 740L870 790 860 740M955 530L1050 435H1110M1075 750L1085 800"/>
                    <path class="ferry" d="M900 1395L960 1372 1030 1490M970 1380L1015 1568"/>
                </g>

                <use href="#motorways" class="casing"/>
                <use href="#motorways" class="motorway"/>

                <text class="waterLabel" transform="translate(1588 1912) rotate(55)">Si</text>
                <text class="region" x="888" y="873">Singapore</text>
                <text class="region" x="886" y="950">Island</text>
                <text class="city" x="1083" y="1519">SINGAPORE</text>

                <rect class="signEdge" x="655" y="1603" width="94" height="74" rx="15"/>
                <rect class="sign" x="661" y="1609" width="82" height="62" rx="10"/>
                <text class="signText" x="702" y="1654">AYE</text>
                <rect class="signEdge" x="1846" y="952" width="120" height="76" rx="15"/>
                <rect class="sign" x="1852" y="958" width="108" height="64" rx="10"/>
                <text class="signText" x="1897" y="1004">KPE</text>

                <!-- recorded route, coloured by pace -->
                <path class="routeShadow" d="M668 1586L684 1556 1256 1143"/>
                <path class="route" stroke="#f9de0b" d="M666 1582L682 1552 782 1477"/>
                <path class="route" stroke="#fda916" d="M782 1477L940 1363"/>
                <path class="route" stroke="#fe7a1d" d="M940 1363L1100 1248"/>
                <path class="route" stroke="#ff4428" d="M1100 1248L1254 1139"/>
                <circle cx="666" cy="1581" r="25" fill="#4fae6f"/>
                <circle cx="1254" cy="1139" r="25" fill="#d73e50"/>
                <circle class="marker" cx="782" cy="1477" r="37"/>
                <circle class="marker" cx="940" cy="1363" r="37"/>
                <circle class="marker" cx="1100" cy="1248" r="37"/>
                <text class="markerText" x="782" y="1495">2</text>
                <text class="markerText" x="940" y="1381">4</text>
                <text class="markerText" x="1099" y="1267">6</text>
            </svg>
            <button class="points">
                <svg class="pointsLogo" viewBox="0 0 100 100">
                    <path class="ring" d="M22 12A47 47 0 1 1 11 23M70 81A38 38 0 1 1 81 71"/>
                    <path d="M25 61L36 54 40 61zM36 51L47 44.500 57 61H43zM48 41L59 34 75 61H62z"/>
                </svg>
                <span>+9</span>
                <svg class="chevron" viewBox="0 0 22 38"><path d="M3 2L18 19 3 36"/></svg>
            </button>
        </section>

        <section class="sport">
            <svg class="sportIcon" viewBox="120 2020 152 140"><circle cx="245" cy="2050" r="13.500"/><circle cx="237.500" cy="2131" r="25.500"/><path d="M164 2148v-62q0-8 8-11l51-14v31h31M179 2090l14.500 17-19.500 22M154 2105a26 26 0 0 0 0 52"/></svg>
            <h2 class="title">CYCLING</h2>
        </section>

        <dl class="stats">
            <div><dd>7.98</dd><dt>Distance (km)</dt></div>
            <div><dd>00:32:16</dd><dt>Duration</dt></div>
            <div><dd>257</dd><dt>Calories</dt></div>
        </dl>

        <ul class="rows">
            <li>
                <svg viewBox="0 0 152 156"><path d="M56 12h29M109 43l13-10M120 92A52 52 0 1 0 97 123M70 78V45A33 33 0 1 1 37 78z"/><circle cx="122" cy="125" r="25"/><path d="M110 124l6 6 11-9 7 5"/></svg>
                <span class="name">Average Pace</span>
                <span class="value">04:02 min/km</span>
            </li>
            <li>
                <svg viewBox="0 0 152 156"><path d="M7 31h30M7 50h92V36l42 42-16 14M7 105h24M37 105h64M46 124h29"/><circle cx="122" cy="125" r="25"/><path d="M110 124l6 6 11-9 7 5"/></svg>
                <span class="name">Average Speed</span>
                <span class="value">14.8 kph</span>
            </li>
            <li>
                <svg viewBox="0 0 152 156"><path d="M7 31h30M7 50h92V36l42 42-16 14M7 105h24M37 105h64M46 124h29"/><circle cx="122" cy="125" r="25"/><path d="M110 125h24M122 113v24"/></svg>
                <span class="name">Max. Speed</span>
                <span class="value">19.5 kph</span>
            </li>
            <li>
                <svg viewBox="0 0 152 156"><path d="M19 81V47l15-19h13l12 10v30L47 81zM66 22h18M75 22v112M93 82V53l10-11h13l17 20v32h-30zM19 94h27v18H30zM103 107h29v18h-20z"/></svg>
                <span class="name">Step Length</span>
                <span class="value">-</span>
            </li>
        </ul>
    </main>

    <nav class="nav">
        <a href="#"><svg viewBox="0 0 130 120"><path d="M7 4.500h116M7 116.500h116M27 78h77"/><rect x="9" y="24" width="112" height="73"/><rect x="29" y="43" width="73" height="20"/></svg>Feed</a>
        <a href="#"><svg viewBox="0 0 130 120"><circle cx="64.500" cy="28" r="14"/><circle cx="30" cy="52.500" r="14"/><circle cx="98" cy="52.500" r="14"/><path d="M54 63h21M3 97l10-15h34l9 15M71 97l11-15h34l10 15"/></svg>Community</a>
        <a href="#"><svg viewBox="0 0 130 120"><path d="M56 4.500h32L71 38h35L26 110l24-52H26z"/></svg>Activity</a>
        <a href="#" class="current"><svg viewBox="4 0 130 120"><rect x="16" y="63" width="18" height="53"/><rect x="56" y="33" width="18" height="83"/><rect x="95" y="4" width="18" height="112"/></svg>Progress</a>
        <a href="#"><svg viewBox="0 0 130 120"><circle cx="65" cy="43" r="25"/><path d="M15 108l25-26h50l24 26"/></svg>Profile</a>
    </nav>
    <div class="home"></div>
</body>
</html>
```
FILE: styles.css
```css
* { box-sizing: border-box; }
body {
    margin: 0;
    height: 100vh;
    display: flex;
    flex-direction: column;
    overflow: hidden;
    background-color: #fff;
    color: #000;
    font-family: Roboto, "Noto Sans", sans-serif;
}
ul, dl, dd, h1, h2 { margin: 0; padding: 0; list-style: none; }
button { border: 0; padding: 0; background: none; font: inherit; color: inherit; }
a { color: inherit; text-decoration: none; }
svg { display: block; flex: none; }

/* status bar */
.statusBar {
    flex: none;
    height: 282px;
    display: flex;
    align-items: center;
    justify-content: space-between;
    padding: 0 157px 0 260px;
}
.time { font-family: Inter, sans-serif; font-weight: 600; font-size: 80px; }
.statusIcons { width: 378px; }

/* header */
.header {
    flex: none;
    height: 178px;
    display: grid;
    grid-template-columns: 1fr auto 1fr;
    align-items: center;
    padding: 0 71px;
}
.title { font-size: 58px; font-weight: 700; letter-spacing: 8px; }
.header .title { letter-spacing: 7px; }
.header svg { fill: none; stroke: #000; stroke-width: 5; }
.back svg { width: 88px; }
.actions { display: flex; align-items: center; justify-content: flex-end; gap: 215px; padding-right: 43px; }
.header .share { width: 90px; }
.header .more { width: 81px; fill: #000; stroke: none; }

/* tabs */
.tabs { flex: none; display: flex; height: 240px; }
.tab {
    flex: 1;
    display: flex;
    justify-content: center;
    align-items: center;
    padding-top: 12px;
    border-bottom: 4px solid #ebeef1;
    color: #aeb1b6;
}
.tab.active { color: #000; box-shadow: inset 0 -6px #000; }
.tab svg { width: 138px; fill: none; stroke: currentColor; stroke-width: 5; }
.tab .solid { fill: currentColor; }

.content { flex: 1; min-height: 0; overflow: hidden; }

/* map */
.mapBox { position: relative; }
.map { width: 100%; }
.map path { vector-effect: non-scaling-stroke; }
.land { fill: #fdfdf3; }
.grass { fill: #c2eca0; }
.light { fill: #e1f4cf; }
.wood { fill: #b5e792; }
.shade { fill: #aade8b; }
.lake { fill: #92defb; }
.sea { fill: #80d5fb; }
.plain { fill: #ebeef1; }
.plain2 { fill: #fff2e2; }
.river, .minor, .medium, .ferry, .route, .routeShadow { fill: none; stroke-linejoin: round; }
.river { stroke: #92defb; stroke-width: 7; }
.river.wide { stroke-width: 16; }
.minor { stroke: #cccdd4; stroke-width: 5; }
.minor.wide { stroke-width: 12; }
.medium { stroke: #cdd4da; stroke-width: 10; }
.medium.big { stroke-width: 14; }
.ferry { stroke: #73b9e8; stroke-width: 3; }
.casing { fill: none; stroke: #8d94a6; stroke-width: 22; }
.motorway { fill: none; stroke: #b1b7c6; stroke-width: 17; }
.region, .city, .waterLabel {
    paint-order: stroke;
    stroke: #fff;
    stroke-width: 6;
    stroke-linejoin: round;
    font-family: Inter, sans-serif;
}
.region { font-size: 75px; font-weight: 600; font-style: italic; fill: #47484b; text-anchor: middle; letter-spacing: 3px; }
.city { font-size: 46px; font-weight: 700; fill: #7b355f; text-anchor: middle; letter-spacing: 3px; }
.waterLabel { font-size: 34px; font-weight: 600; font-style: italic; fill: #4294dc; stroke: none; }
.signEdge { fill: #1272ff; }
.sign { fill: #1272ff; stroke: #fff; stroke-width: 4; }
.signText { font-family: "Roboto Condensed", Roboto, sans-serif; font-size: 38px; font-weight: 700; fill: #fff; text-anchor: middle; }
.route { stroke-width: 27; }
.routeShadow { stroke: #000; stroke-opacity: .17; stroke-width: 35; }
.marker { fill: #464648; }
.markerText { font-family: Inter, sans-serif; font-size: 52px; font-weight: 600; fill: #fff; text-anchor: middle; }

/* points badge over the map */
.points {
    position: absolute;
    top: 116px;
    right: 116px;
    height: 154px;
    display: flex;
    align-items: center;
    gap: 24px;
    padding: 0 46px;
    border-radius: 24px;
    background-color: #ebeef1;
    font-family: "Roboto Condensed", Roboto, sans-serif;
    font-weight: 700;
    font-size: 86px;
}
.pointsLogo { width: 98px; }
.ring { fill: none; stroke: #000; stroke-width: 4; }
.chevron { width: 22px; fill: none; stroke: #a7aab0; stroke-width: 4; }

/* sport */
.sport {
    height: 308px;
    display: flex;
    align-items: center;
    gap: 79px;
    padding-left: 118px;
    background-color: #ebeef1;
}
.sportIcon, .rows svg { width: 150px; fill: none; stroke: #000; stroke-width: 5; }

/* totals */
.stats { display: flex; height: 391px; padding-top: 114px; }
.stats div { flex: 1; display: flex; flex-direction: column; align-items: center; }
.stats dd {
    font-family: "Roboto Condensed", Roboto, sans-serif;
    font-size: 108px;
    line-height: 128px;
    font-weight: 700;
}
.stats dt { font-size: 57px; line-height: 96px; color: #767779; }

/* detail rows */
.rows li {
    display: flex;
    align-items: center;
    gap: 79px;
    height: 308px;
    padding: 12px 117px 0 118px;
    border-bottom: 2px solid #eeeff1;
    font-size: 67px;
}
.name { font-weight: 700; }
.value { margin-left: auto; }

/* bottom navigation */
.nav { flex: none; display: flex; height: 336px; border-top: 4px solid #c5c7cb; }
.nav a {
    flex: 1;
    display: flex;
    flex-direction: column;
    align-items: center;
    gap: 20px;
    padding-top: 20px;
    font-size: 57px;
    line-height: 76px;
    color: #aeb1b6;
}
.nav svg { width: 128px; fill: none; stroke: currentColor; stroke-width: 5; }
.nav .current { color: #000; }
.home { flex: none; width: 35.6%; height: 24px; margin: 2px auto 39px; border-radius: 12px; background-color: #000; }
```
